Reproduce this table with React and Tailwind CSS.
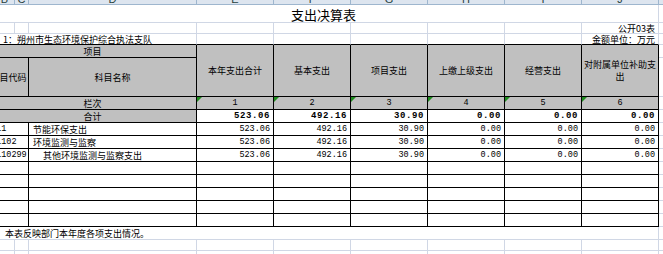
const cjk = "font-['Noto_Sans_CJK_SC','Noto_Sans',sans-serif]"
const mono = "font-['Liberation_Mono','DejaVu_Sans_Mono',monospace]"

const grid = 'border-r border-b border-[#d0d7e5]'
const edge = 'border-r border-b border-r-[#d0d7e5] border-b-black'
const tbl = 'border-r border-b border-black'

const letters = ['A', 'B', 'C', 'D', 'E', 'F', 'G', 'H', 'I', 'J', 'K']
const heads = ['本年支出合计', '基本支出', '项目支出', '上缴上级支出', '经营支出']
const totals = ['523.06', '492.16', '30.90', '0.00', '0.00', '0.00']

const rows = [
  { code: '211', name: '节能环保支出', indent: false },
  { code: '21102', name: '环境监测与监察', indent: false },
  { code: '2110299', name: '其他环境监测与监察支出', indent: true },
]

function Flag() {
  return (
    <span className="absolute top-0 left-0 w-0 h-0 border-t-[5px] border-r-[5px] border-t-[#1e8c1e] border-r-transparent"></span>
  )
}

function GridRow() {
  return letters.map((l) => <div key={l} className={grid}></div>)
}

export default function App() {
  return (
    <div className={`w-[663px] h-[254px] overflow-hidden bg-white text-black ${cjk}`}>
      <div className="ml-[-11px] grid grid-cols-[6px_20px_14px_168px_77px_77px_77px_77px_77px_77px_60px] grid-rows-[5px_18px_11px_11px_13px_39px_repeat(10,13px)_13px_11px_11px]">
        {/* column letters, scrolled so only their lower part shows */}
        {letters.map((l) => (
          <div key={l} className="overflow-hidden bg-[#dde5ef] border-r border-b border-[#9eb6ce]">
            <span className="block -mt-[6px] text-[11px] leading-[11px] text-center text-[#27413e] font-['Liberation_Sans',sans-serif]">
              {l}
            </span>
          </div>
        ))}

        {/* title */}
        <div className={`col-span-10 flex items-end justify-center pb-[1px] text-[13px] leading-none ${grid}`}>
          支出决算表
        </div>
        <div className={grid}></div>

        {/* 公开03表 */}
        {letters.slice(0, 9).map((l) => <div key={l} className={grid}></div>)}
        <div className={`flex items-center justify-end pr-[3px] overflow-hidden text-[9px] leading-[9px] ${grid}`}>公开03表</div>
        <div className={grid}></div>

        {/* unit */}
        <div className={`col-span-4 flex items-center pl-[14px] text-[9px] leading-[9px] whitespace-nowrap ${edge}`}>
          1：朔州市生态环境保护综合执法支队
        </div>
        {letters.slice(4, 9).map((l) => <div key={l} className={edge}></div>)}
        <div className={`flex items-center justify-end pr-[3px] overflow-hidden text-[9px] leading-[9px] whitespace-nowrap ${edge}`}>
          金额单位：万元
        </div>
        <div className={grid}></div>

        {/* table header */}
        <div className={`col-span-4 flex items-center justify-center bg-[#c0c0c0] text-[9px] leading-none ${tbl}`}>项目</div>
        {heads.map((h) => (
          <div key={h} className={`row-span-2 flex items-center justify-center bg-[#c0c0c0] text-[9px] leading-none ${tbl}`}>
            {h}
          </div>
        ))}
        <div className={`row-span-2 flex items-center justify-center text-center bg-[#c0c0c0] text-[9px] leading-[12px] ${tbl}`}>
          对附属单位补助支<br />出
        </div>
        <div className={grid}></div>
        <div className={`col-span-3 flex items-center justify-center bg-[#c0c0c0] text-[9px] leading-none ${tbl}`}>科目代码</div>
        <div className={`flex items-center justify-center bg-[#c0c0c0] text-[9px] leading-none ${tbl}`}>科目名称</div>
        <div className={grid}></div>

        {/* 栏次 */}
        <div className={`col-span-4 flex items-center justify-center bg-[#c0c0c0] text-[9px] leading-none ${tbl}`}>栏次</div>
        {totals.map((_, i) => (
          <div key={i} className={`relative flex items-center justify-center bg-[#c0c0c0] text-[8.5px] leading-none ${mono} ${tbl}`}>
            <Flag />
            {i + 1}
          </div>
        ))}
        <div className={grid}></div>

        {/* 合计 */}
        <div className={`col-span-4 flex items-center justify-center bg-[#c0c0c0] text-[9px] leading-none ${tbl}`}>合计</div>
        {totals.map((v, i) => (
          <div key={i} className={`flex items-center justify-end pr-[3px] text-[9px] font-bold tracking-[0.6px] leading-none ${mono} ${tbl}`}>
            {v}
          </div>
        ))}
        <div className={grid}></div>

        {/* data rows */}
        {rows.map((r) => [
          <div key={r.code + 'c'} className={`col-span-3 flex items-center pl-[2px] text-[8.5px] leading-none whitespace-nowrap ${mono} ${tbl}`}>
            {r.code}
          </div>,
          <div key={r.code + 'n'} className={`flex items-center text-[9px] leading-none whitespace-nowrap ${r.indent ? 'pl-[14px]' : 'pl-[4px]'} ${tbl}`}>
            {r.name}
          </div>,
          ...totals.map((v, i) => (
            <div key={r.code + i} className={`flex items-center justify-end pr-[3px] text-[8.5px] leading-none ${mono} ${tbl}`}>
              {v}
            </div>
          )),
          <div key={r.code + 'k'} className={grid}></div>,
        ])}

        {/* empty rows */}
        {[0, 1, 2, 3, 4].map((n) => [
          <div key={n + 'c'} className={`col-span-3 ${tbl}`}></div>,
          <div key={n + 'n'} className={tbl}></div>,
          ...totals.map((_, i) => <div key={n + '-' + i} className={tbl}></div>),
          <div key={n + 'k'} className={grid}></div>,
        ])}

        {/* note */}
        <div className={`col-span-10 flex items-center pl-[16px] text-[9px] leading-none whitespace-nowrap ${grid}`}>
          本表反映部门本年度各项支出情况。
        </div>
        <div className={grid}></div>

        <GridRow />
        <GridRow />
      </div>
    </div>
  )
}
